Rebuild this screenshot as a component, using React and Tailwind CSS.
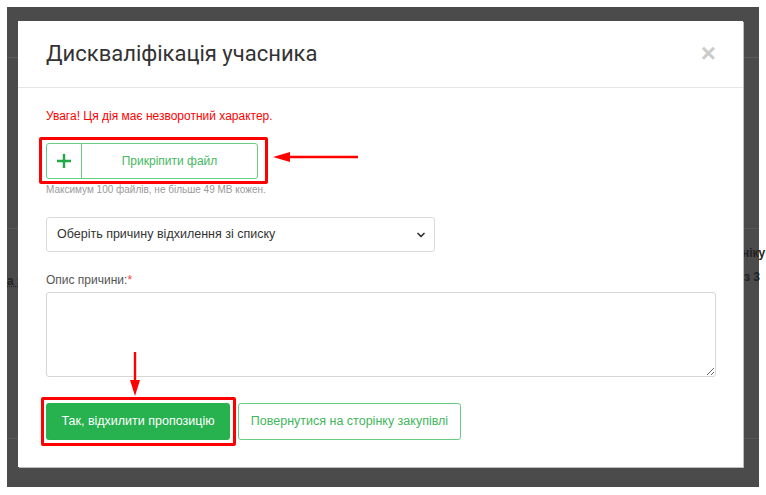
import React from "react";
import { ChevronDown } from "lucide-react";

const SANS = { fontFamily: '"Liberation Sans", Arial, sans-serif' };

export default function App() {
  return (
    <div className="w-[766px] h-[495px] bg-white pt-[7px] pl-[7px] overflow-hidden" style={SANS}>
      <div className="relative w-[752px] h-[480px] bg-[#4b4b4b] pt-[14px] pl-[11px]">
        {/* faint page content behind overlay */}
        <div className="absolute left-0 right-0 top-[50px] h-px bg-[#5c5c5c]" />
        <div className="absolute left-0 right-0 top-[221px] h-px bg-[#575757]" />
        <div className="absolute left-0 right-0 top-[431px] h-px bg-[#575757]" />
        <div className="absolute left-0 top-[268px] text-[12px] font-bold text-[#222] leading-none underline decoration-dotted" style={SANS}>а з</div>
        <div className="absolute left-[735px] top-[240px] text-[12px] font-bold text-[#222] leading-none whitespace-nowrap" style={SANS}>ніку</div>
        <div className="absolute left-[737px] top-[264px] text-[12px] font-bold text-[#222] leading-none whitespace-nowrap" style={SANS}>з 3</div>

        {/* modal */}
        <div className="relative w-[725px] h-[446px] bg-white shadow-[1px_1px_0_#bdbdbd] flex flex-col">
          <div className="h-[67px] shrink-0 flex items-center justify-between pl-[28px] pr-[27px] border-b border-[#e5e5e5]">
            <h1 className="text-[22px] text-[#333] leading-none" style={{ fontFamily: 'Roboto, "Noto Sans", sans-serif' }}>
              Дискваліфікація учасника
            </h1>
            <span className="text-[26px] font-bold text-[#cbcbcb] leading-none -mt-[2px]" style={SANS}>×</span>
          </div>

          <div className="flex flex-col items-start px-[28px]">
            <p className="mt-[20px] text-[12px] leading-[16px] text-[#ff0000]" style={SANS}>Увага! Ця дія має незворотний характер.</p>

            <div className="relative mt-[19px]">
              <div className="absolute -left-[7px] -top-[6px] -right-[10px] -bottom-[5px] border-[3px] border-[#ff0000] rounded-[2px] pointer-events-none" />
              <button className="flex w-[212px] h-[36px] border border-[#6acc82] rounded-[3px] bg-white" style={SANS}>
                <span className="w-[35px] h-full flex items-center justify-center border-r border-[#6acc82]">
                  <svg width="14" height="14" viewBox="0 0 14 14">
                    <path d="M7 0v14M0 7h14" stroke="#21a847" strokeWidth="2.4" />
                  </svg>
                </span>
                <span className="flex-1 flex items-center justify-center text-[12px] text-[#45b85f]">Прикріпити файл</span>
              </button>
            </div>

            <p className="mt-[5px] text-[10px] leading-[12px] text-[#9a9a9a]" style={SANS}>Максимум 100 файлів, не більше 49 MB кожен.</p>

            <div className="mt-[21px] w-[389px] h-[35px] border border-[#dadada] rounded-[3px] flex items-center justify-between pl-[10px] pr-[7px]">
              <span className="text-[12.5px] text-[#333]" style={SANS}>Оберіть причину відхилення зі списку</span>
              <ChevronDown size={12} strokeWidth={3.5} color="#333" />
            </div>

            <label className="mt-[20px] text-[12px] leading-[16px] text-[#555]" style={SANS}>
              Опис причини:<span className="text-[#ff3b3b]">*</span>
            </label>

            <textarea className="mt-[4px] w-[670px] h-[85px] border border-[#d6d6d6] rounded-[3px] outline-none" />

            <div className="mt-[26px] flex gap-[8px]">
              <div className="relative">
                <div className="absolute -left-[5px] -top-[6px] -right-[6px] -bottom-[6px] border-[3px] border-[#ff0000] rounded-[2px] pointer-events-none" />
                <button className="w-[184px] h-[37px] bg-[#27b14f] rounded-[3px] text-white text-[12.5px]" style={SANS}>Так, відхилити пропозицію</button>
              </div>
              <button className="w-[223px] h-[37px] border border-[#6acc82] rounded-[3px] bg-white text-[#3fb65b] text-[12.5px]" style={SANS}>
                Повернутися на сторінку закупівлі
              </button>
            </div>
          </div>

          {/* annotation arrows */}
          <svg className="absolute left-[254px] top-[129px]" width="88" height="14" viewBox="0 0 88 14">
            <path d="M16 7H86" stroke="#ff0000" strokeWidth="2.4" />
            <path d="M1 7L18 2V12Z" fill="#ff0000" />
          </svg>
          <svg className="absolute left-[110px] top-[331px]" width="14" height="45" viewBox="0 0 14 45">
            <path d="M7 0V30" stroke="#ff0000" strokeWidth="2.4" />
            <path d="M7 44L2 28H12Z" fill="#ff0000" />
          </svg>
        </div>
      </div>
    </div>
  );
}
